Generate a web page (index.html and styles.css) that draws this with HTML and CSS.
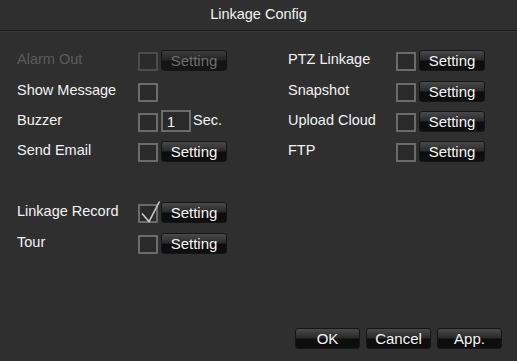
FILE: index.html
```html
<!DOCTYPE html>
<html lang="en">
<head>
  <meta charset="UTF-8">
  <title>Linkage Config</title>
  <link rel="stylesheet" href="styles.css">
</head>
<body>

<div class="dialog">
  <div class="title-bar">Linkage Config</div>

  <div class="content">
    <div class="column left">
      <div class="row tall disabled">
        <span class="label">Alarm Out</span>
        <span class="check"></span>
        <button class="btn">Setting</button>
      </div>
      <div class="row">
        <span class="label">Show Message</span>
        <span class="check"></span>
      </div>
      <div class="row">
        <span class="label">Buzzer</span>
        <span class="check"></span>
        <span class="num-box">1</span>
        <span class="unit">Sec.</span>
      </div>
      <div class="row tall">
        <span class="label">Send Email</span>
        <span class="check"></span>
        <button class="btn">Setting</button>
      </div>
      <div class="row"></div>
      <div class="row tall">
        <span class="label">Linkage Record</span>
        <span class="check checked">
          <svg class="tick" width="24" height="24" viewBox="0 0 24 24">
            <polyline points="3,12.5 10,20.5 20.5,0.5" fill="none" stroke="#c9c9c9" stroke-width="1.6"/>
          </svg>
        </span>
        <button class="btn">Setting</button>
      </div>
      <div class="row">
        <span class="label">Tour</span>
        <span class="check"></span>
        <button class="btn">Setting</button>
      </div>
    </div>

    <div class="column right">
      <div class="row tall">
        <span class="label">PTZ Linkage</span>
        <span class="check"></span>
        <button class="btn">Setting</button>
      </div>
      <div class="row">
        <span class="label">Snapshot</span>
        <span class="check"></span>
        <button class="btn">Setting</button>
      </div>
      <div class="row">
        <span class="label">Upload Cloud</span>
        <span class="check"></span>
        <button class="btn">Setting</button>
      </div>
      <div class="row">
        <span class="label">FTP</span>
        <span class="check"></span>
        <button class="btn">Setting</button>
      </div>
    </div>
  </div>

  <div class="footer">
    <button class="btn">OK</button>
    <button class="btn">Cancel</button>
    <button class="btn">App.</button>
  </div>
</div>

</body>
</html>
```

FILE: styles.css
```css
body {
  margin: 0;
  background-color: #2f2f2f;
  font-family: 'Liberation Sans', Arial, sans-serif;
  font-size: 14.5px;
  color: #f2f2f2;
}
.dialog {
  width: 517px;
  height: 361px;
  display: flex;
  flex-direction: column;
  background-color: #2f2f2f;
}
.title-bar {
  height: 31px;
  box-sizing: border-box;
  padding-top: 4px;
  line-height: 20px;
  text-align: center;
  border-bottom: 1px solid #181818;
  box-shadow: 0 1px 0 #3a3a3a;
}
.content {
  display: flex;
  padding: 19px 0 0 17px;
}
.column {
  display: flex;
  flex-direction: column;
}
.left {
  width: 271px;
}
.row {
  display: flex;
  align-items: flex-start;
  height: 30px;
}
.row.tall {
  height: 31px;
}
.label {
  line-height: 16px;
  margin-top: 1px;
}
.left .label {
  width: 121px;
}
.right .label {
  width: 108px;
}
.check {
  position: relative;
  box-sizing: border-box;
  width: 20px;
  height: 19px;
  margin-top: 2px;
  margin-right: 3px;
  border: 2px solid #6b6b6b;
  background-color: #2a2a2a;
}
.tick {
  position: absolute;
  left: -1px;
  top: -5px;
}
.btn {
  box-sizing: border-box;
  width: 66px;
  height: 21px;
  padding: 0;
  font-family: inherit;
  font-size: 15px;
  color: #f4f4f4;
  border: 1px solid #151515;
  border-radius: 3px;
  background: linear-gradient(#4a4a4a, #2a2a2a 45%, #0c0c0c 55%, #0f0f0f);
  cursor: pointer;
}
.num-box {
  box-sizing: border-box;
  width: 30px;
  height: 22px;
  margin-top: -1px;
  padding: 2px 0 0 4px;
  line-height: 16px;
  border: 2px solid #6b6b6b;
  background-color: #2a2a2a;
}
.unit {
  line-height: 16px;
  margin: 1px 0 0 2px;
}
.disabled .label {
  color: #5c5c5c;
}
.disabled .check {
  border-color: #4c4c4c;
}
.disabled .btn {
  color: #6e6e6e;
  background: linear-gradient(#3c3c3c, #262626 45%, #141414 55%, #161616);
}
.footer {
  margin-top: auto;
  display: flex;
  justify-content: flex-end;
  gap: 6px;
  padding: 0 15px 12px 0;
}
.footer .btn {
  width: 65px;
}
```
